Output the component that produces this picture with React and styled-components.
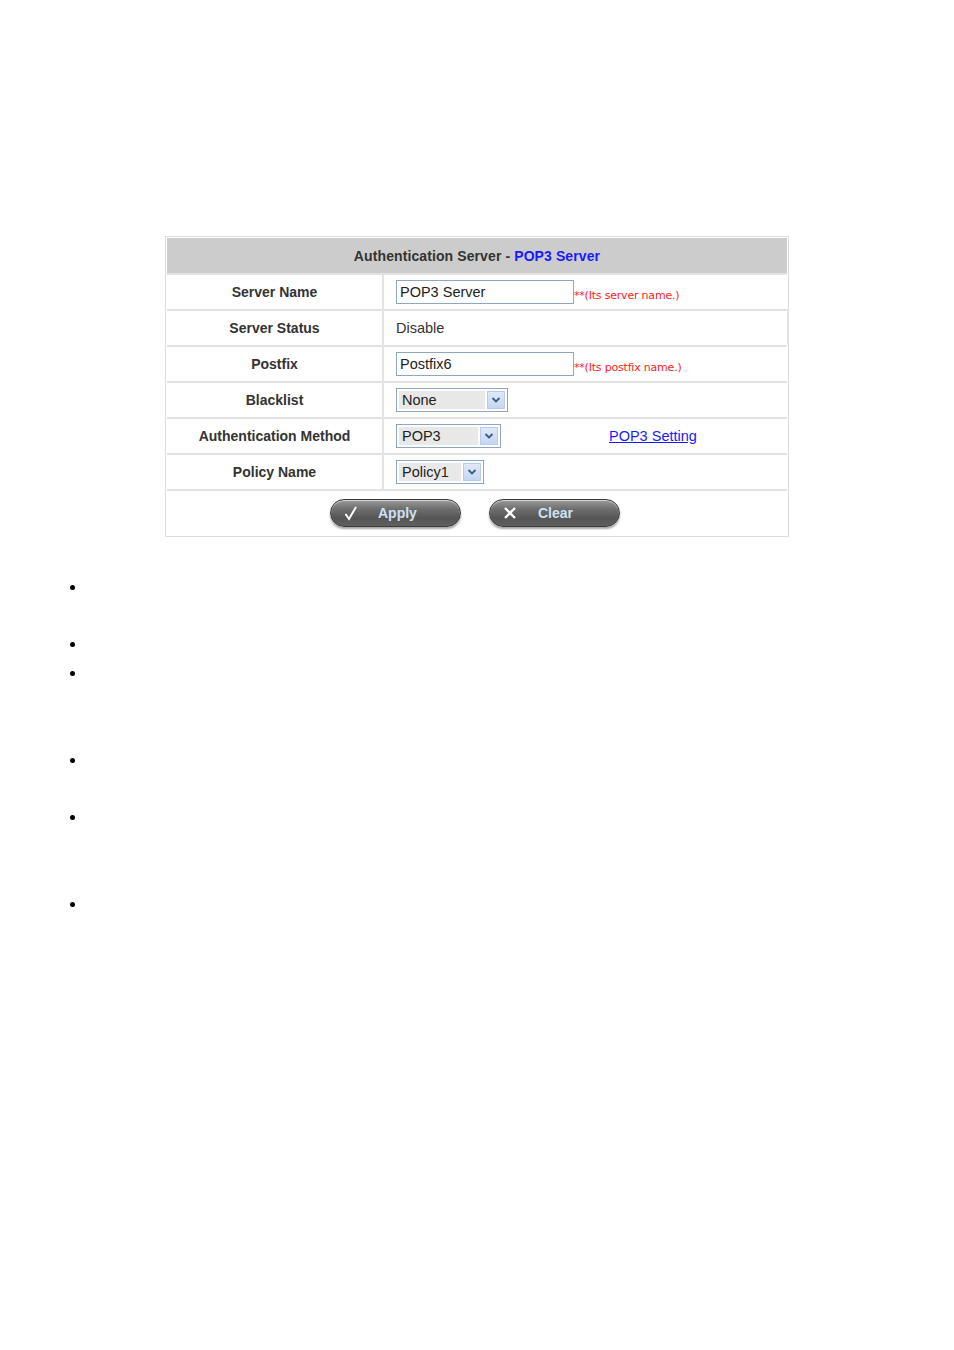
import React from "react";
import styled, { createGlobalStyle } from "styled-components";

const GlobalStyle = createGlobalStyle`
  html, body {
    margin: 0;
    padding: 0;
    background: #fff;
  }
  body {
    font-family: "Liberation Sans", Arial, sans-serif;
    color: #333;
  }
`;

const Page = styled.div`
  width: 954px;
  min-height: 1350px;
  padding-top: 236px;
  box-sizing: border-box;
`;

const Panel = styled.div`
  margin-left: 165px;
  width: 624px;
  box-sizing: border-box;
  border: 1px solid #dcdcdc;
  padding: 1px;
`;

const Header = styled.div`
  height: 35px;
  background: #cccccc;
  display: flex;
  align-items: center;
  justify-content: center;
  font-size: 14px;
  font-weight: bold;
  color: #333;
  letter-spacing: 0.1px;
`;

const Blue = styled.span`
  color: #1a1aff;
  margin-left: 4px;
`;

const Row = styled.div`
  display: grid;
  grid-template-columns: 217px 1fr;
  height: 36px;
  border-top: 2px solid #e3e3e3;
  box-sizing: border-box;
  margin-right: ${(p) => (p.$wide ? "-2px" : "0")};
  border-right: ${(p) => (p.$wide ? "2px solid #e3e3e3" : "none")};
`;

const Label = styled.div`
  display: flex;
  align-items: center;
  justify-content: center;
  font-size: 14px;
  font-weight: bold;
  color: #333;
  border-right: 2px solid #e3e3e3;
`;

const Value = styled.div`
  display: flex;
  align-items: center;
  padding-left: 12px;
  font-size: 14.5px;
  color: #333;
`;

const TextBox = styled.div`
  width: 178px;
  height: 24px;
  box-sizing: border-box;
  border: 1px solid #8ea5c4;
  padding-left: 3px;
  display: flex;
  align-items: center;
  font-size: 14.5px;
  color: #222;
  background: #fff;
`;

const Hint = styled.span`
  color: #ff1a1a;
  font-size: 11px;
  margin-top: 6px;
  font-family: "DejaVu Sans", Verdana, sans-serif;
  letter-spacing: -0.2px;
`;

const Select = styled.div`
  width: ${(p) => p.$w}px;
  height: 24px;
  box-sizing: border-box;
  border: 1px solid #8ea5c4;
  padding: 2px;
  display: flex;
  gap: 2px;
  background: #fff;
`;

const SelectText = styled.div`
  flex: 1;
  background: #e8e8e8;
  display: flex;
  align-items: center;
  padding-left: 3px;
  font-size: 14.5px;
  color: #222;
`;

const Arrow = styled.div`
  width: 18px;
  background: linear-gradient(#dfe9f8, #c4d6f2);
  border: 1px solid #b9cbe6;
  box-sizing: border-box;
  display: flex;
  align-items: center;
  justify-content: center;
`;

const Link = styled.a`
  margin-left: 108px;
  color: #1a1aff;
  text-decoration: underline;
  font-size: 14.5px;
`;

const ButtonRow = styled.div`
  height: 44px;
  border-top: 2px solid #e3e3e3;
  display: flex;
  align-items: center;
  padding-left: 163px;
  gap: 28px;
`;

const Pill = styled.button`
  width: 131px;
  height: 28px;
  border-radius: 14px;
  border: 1px solid #3a3a3a;
  background: linear-gradient(#9a9a9a 0%, #6e6e6e 35%, #555 70%, #606060 100%);
  box-shadow: inset 0 1px 1px rgba(255, 255, 255, 0.6), 0 2px 2px rgba(0, 0, 0, 0.35);
  display: flex;
  align-items: center;
  padding: 0 0 0 10px;
  color: #cfe0f4;
  font-family: "Liberation Sans", Arial, sans-serif;
  font-size: 14px;
  font-weight: bold;
  cursor: pointer;
`;

const PillIcon = styled.span`
  width: 20px;
  display: flex;
  align-items: center;
  justify-content: center;
`;

const PillText = styled.span`
  margin-left: ${(p) => p.$gap}px;
`;

const Bullets = styled.ul`
  margin: 0;
  padding: 0;
  list-style: none;
  margin-top: 48px;
`;

const Bullet = styled.li`
  height: 5px;
  width: 5px;
  border-radius: 50%;
  background: #000;
  margin-left: 70px;
  margin-top: ${(p) => p.$top}px;
`;

const ArrowIcon = () => (
  <svg width="10" height="8" viewBox="0 0 10 8">
    <path d="M1.5 2 L5 5.5 L8.5 2" fill="none" stroke="#3c5a8a" strokeWidth="1.8" />
  </svg>
);

const Drop = ({ w, value }) => (
  <Select $w={w}>
    <SelectText>{value}</SelectText>
    <Arrow>
      <ArrowIcon />
    </Arrow>
  </Select>
);

const bullets = [0, 52, 24, 82, 52, 82];

export default function App() {
  return (
    <Page>
      <GlobalStyle />
      <Panel>
        <Header>
          Authentication Server -<Blue>POP3 Server</Blue>
        </Header>
        <Row>
          <Label>Server Name</Label>
          <Value>
            <TextBox>POP3 Server</TextBox>
            <Hint>**(Its server name.)</Hint>
          </Value>
        </Row>
        <Row $wide>
          <Label>Server Status</Label>
          <Value>Disable</Value>
        </Row>
        <Row>
          <Label>Postfix</Label>
          <Value>
            <TextBox>Postfix6</TextBox>
            <Hint>**(Its postfix name.)</Hint>
          </Value>
        </Row>
        <Row>
          <Label>Blacklist</Label>
          <Value>
            <Drop w={112} value="None" />
          </Value>
        </Row>
        <Row>
          <Label>Authentication Method</Label>
          <Value>
            <Drop w={105} value="POP3" />
            <Link href="#">POP3 Setting</Link>
          </Value>
        </Row>
        <Row>
          <Label>Policy Name</Label>
          <Value>
            <Drop w={88} value="Policy1" />
          </Value>
        </Row>
        <ButtonRow>
          <Pill>
            <PillIcon>
              <svg width="16" height="16" viewBox="0 0 16 16">
                <path d="M2.5 9 L6 14 L13 2" fill="none" stroke="#fff" strokeWidth="2" />
              </svg>
            </PillIcon>
            <PillText $gap={17}>Apply</PillText>
          </Pill>
          <Pill>
            <PillIcon>
              <svg width="14" height="14" viewBox="0 0 14 14">
                <path d="M2 2 L12 12 M12 2 L2 12" stroke="#fff" strokeWidth="2.4" />
              </svg>
            </PillIcon>
            <PillText $gap={18}>Clear</PillText>
          </Pill>
        </ButtonRow>
      </Panel>
      <Bullets>
        {bullets.map((t, i) => (
          <Bullet key={i} $top={t} />
        ))}
      </Bullets>
    </Page>
  );
}
